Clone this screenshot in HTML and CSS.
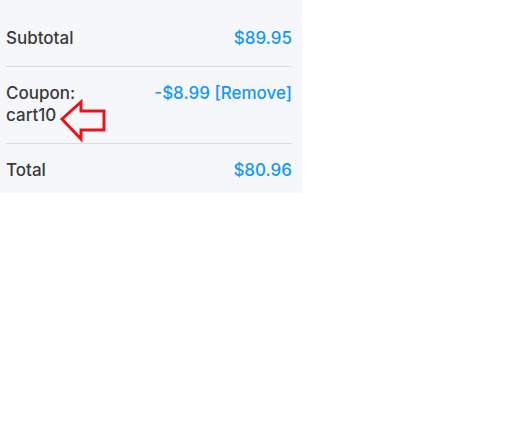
FILE: index.html
```html
<!DOCTYPE html>
<html>
<head>
<meta charset="utf-8">
<link rel="stylesheet" href="styles.css">
</head>
<body>
<div class="summary">
  <div class="row">
    <span class="label">Subtotal</span>
    <span class="amount">$89.95</span>
  </div>
  <div class="row coupon">
    <span class="label narrow">Coupon: cart10</span>
    <span class="amount">-$8.99 <a class="remove" href="#">[Remove]</a></span>
    <svg class="arrow" width="50" height="46" viewBox="0 0 50 46">
      <polygon points="3,20 22,3 22,12 45,12 45,31 22,31 22,40" fill="none" stroke="#e8141c" stroke-width="3" stroke-linejoin="miter"/>
    </svg>
  </div>
  <div class="row last">
    <span class="label">Total</span>
    <span class="amount">$80.96</span>
  </div>
</div>
</body>
</html>
```
FILE: styles.css
```css
html, body {
  margin: 0;
  padding: 0;
  background: #ffffff;
}
.summary {
  width: 302px;
  box-sizing: border-box;
  background: #f6f7fb;
  padding: 12px 10px 0 6px;
  font-family: "Inter", "Liberation Sans", sans-serif;
  font-size: 17px;
  font-weight: 500;
  line-height: 22px;
}
.row {
  position: relative;
  display: flex;
  justify-content: space-between;
  align-items: flex-start;
  padding: 15px 0 17px;
  border-bottom: 1px solid #dcdde2;
}
.row.last {
  border-bottom: none;
  padding-bottom: 12px;
}
.label {
  color: #3a3a3a;
}
.narrow {
  max-width: 95px;
}
.amount {
  color: #1297fb;
  text-align: right;
}
.remove {
  color: #1297fb;
  text-decoration: none;
}
.arrow {
  position: absolute;
  left: 53px;
  top: 32px;
}
```
